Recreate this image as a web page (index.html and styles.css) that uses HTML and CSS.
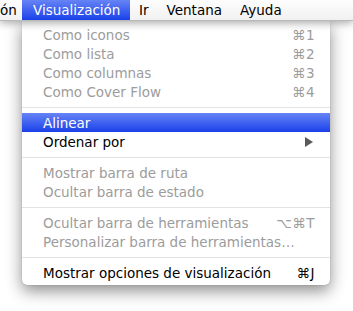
FILE: index.html
```html
<!DOCTYPE html>
<html lang="es">
<head>
  <meta charset="UTF-8" />
  <title>Visualización</title>
  <link rel="stylesheet" href="styles.css">
</head>
<body>
  <div class="menubar">
    <span class="title cut">ón</span>
    <span class="title open">Visualización</span>
    <span class="title">Ir</span>
    <span class="title">Ventana</span>
    <span class="title">Ayuda</span>
  </div>

  <div class="menu">
    <div class="item off"><span>Como iconos</span><span class="key">⌘1</span></div>
    <div class="item off"><span>Como lista</span><span class="key">⌘2</span></div>
    <div class="item off"><span>Como columnas</span><span class="key">⌘3</span></div>
    <div class="item off"><span>Como Cover Flow</span><span class="key">⌘4</span></div>
    <div class="sep"></div>
    <div class="item active"><span>Alinear</span></div>
    <div class="item"><span>Ordenar por</span><span class="arrow"></span></div>
    <div class="sep"></div>
    <div class="item off"><span>Mostrar barra de ruta</span></div>
    <div class="item off"><span>Ocultar barra de estado</span></div>
    <div class="sep"></div>
    <div class="item off"><span>Ocultar barra de herramientas</span><span class="key">⌥⌘T</span></div>
    <div class="item off"><span>Personalizar barra de herramientas…</span></div>
    <div class="sep"></div>
    <div class="item"><span>Mostrar opciones de visualización</span><span class="key">⌘J</span></div>
  </div>
</body>
</html>
```

FILE: styles.css
```css
* {
    box-sizing: border-box;
    margin: 0;
    padding: 0;
}

body {
    font-family: 'DejaVu Sans', 'Liberation Sans', sans-serif;
    font-size: 13.5px;
    background: #fff;
    width: 353px;
    height: 311px;
    overflow: hidden;
}

.menubar {
    position: relative;
    z-index: 2;
    height: 21px;
    display: flex;
    align-items: stretch;
    background: linear-gradient(#fdfdfd, #f1f1f1);
    border-bottom: 1px solid #b9b9b9;
    box-shadow: 0 2px 8px rgba(0,0,0,0.35);
}

.title {
    display: flex;
    align-items: center;
    padding: 0 9px;
    color: #000;
}

.title.cut {
    width: 22px;
    padding: 0;
}

.title.open {
    color: #fff;
    padding: 0 0 0 11px;
    background: linear-gradient(#6684f5, #1a41ea);
    width: 108px;
}

.menu {
    position: relative;
    z-index: 1;
    margin-left: 22px;
    width: 308px;
    padding: 4px 0 3px;
    background: #fff;
    border-radius: 0 0 5px 5px;
    box-shadow: 0 6px 16px rgba(0,0,0,0.45), 0 0 1px rgba(0,0,0,0.4);
}

.item {
    height: 19px;
    display: flex;
    align-items: center;
    justify-content: space-between;
    padding: 0 15px 0 21px;
    color: #000;
}

.item.off {
    color: #9c9c9c;
}

.item.active {
    color: #fff;
    background: linear-gradient(#6684f5, #1a41ea);
}

.key {
    letter-spacing: 0.5px;
}

.arrow {
    width: 0;
    height: 0;
    margin-right: 2px;
    border-top: 5px solid transparent;
    border-bottom: 5px solid transparent;
    border-left: 8px solid #5a5a5a;
}

.sep {
    height: 1px;
    margin: 6px 0 5px;
    background: #e2e2e2;
}
```
